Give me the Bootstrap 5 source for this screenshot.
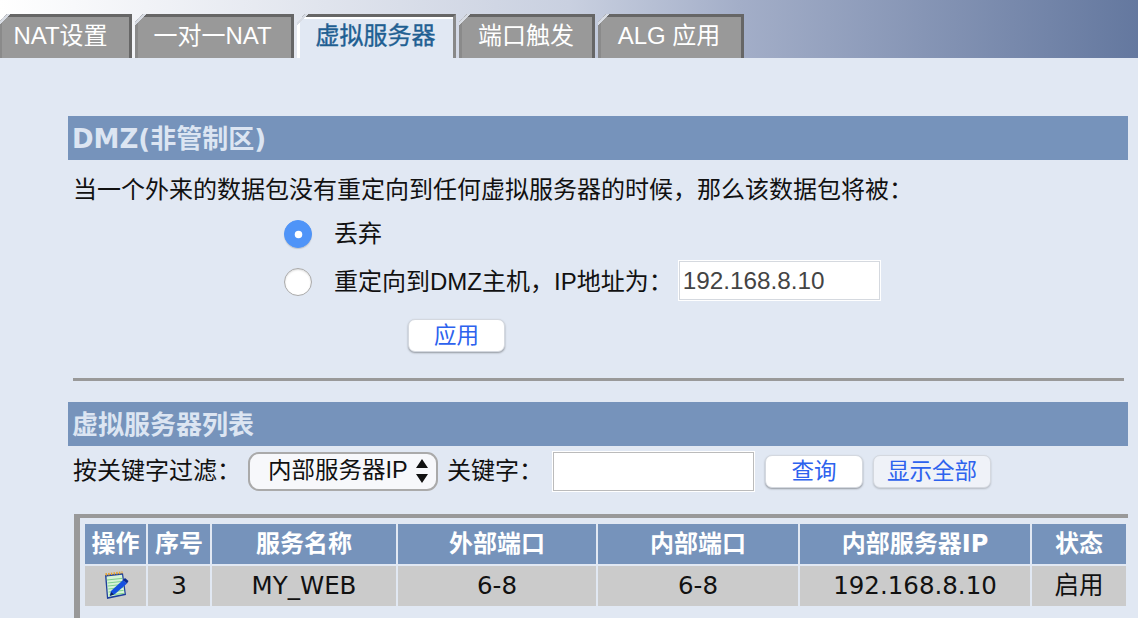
<!DOCTYPE html>
<html lang="zh">
<head>
<meta charset="utf-8">
<title>虚拟服务器</title>
<link href="https://cdn.jsdelivr.net/npm/bootstrap@5.3.0/dist/css/bootstrap.min.css" rel="stylesheet">
<style>
html,body{height:618px;overflow:hidden}
body{background:#e1e8f3;color:#111;font-family:"Liberation Sans","Noto Sans CJK SC",sans-serif;font-size:24px;line-height:1.2}
.top-band{height:58px;background:linear-gradient(90deg,#fff 0,#c9d0e0 50%,#a3aec8 65%,#64789f 100%);padding-top:14px;gap:3px}
.tab-item{position:relative;height:44px;background:#999;color:#fff;font-size:24px;text-decoration:none;border-top:3px solid #666;border-right:3px solid #666;border-left:3px solid #8a8a8a;display:flex;align-items:center;justify-content:center;padding:0 2px 2px 0;clip-path:polygon(8px 0,100% 0,100% 100%,0 100%,0 8px)}
.tab-item::before{content:"";position:absolute;left:-3px;top:-3px;width:12px;height:12px;background:linear-gradient(135deg,transparent 30%,#d8dce4 30%,#d8dce4 46%,transparent 46%)}
.tab-item:hover{color:#fff}
.tab-on{background:#e1e8f3;color:#1f5f92;border-top-color:#666;border-right-color:#888;border-left-color:#fff;box-shadow:inset 0 2px 0 #fff;-webkit-text-stroke:.4px #1f5f92}
.tab-on:hover{color:#1f5f92}
.tab-a{width:133px;margin-left:-1px;padding-right:10px}.tab-b{width:159px;padding-right:4px}.tab-c{width:159px}.tab-d{width:136px}.tab-e{width:146px;padding-right:4px}
.main-pane{margin-left:68px;margin-right:10px}
.sec-head{height:44px;background:#7693bb;color:#dce5f2;font-family:"DejaVu Sans","Noto Sans CJK SC",sans-serif;font-weight:700;font-size:26px;padding:3px 0 0 4px;display:flex;align-items:center}
.sec-first{margin-top:58px}
.intro-line{height:50px;padding:10px 0 0 5px;display:flex;align-items:center;white-space:nowrap}
.radio-row{height:48px;margin-left:216px;display:flex;align-items:center}
.radio-row .form-check-input{width:28px;height:28px;margin:0 22px 0 0;flex:none;border:1px solid #aaa;background-color:#fff;box-shadow:inset 0 1px 2px rgba(0,0,0,.15)}
.radio-row .form-check-input:checked{background-color:#4f94f8;border-color:#4f94f8;background-size:57%;box-shadow:0 1px 1px rgba(0,0,0,.15)}
.txt-box{height:39px;border:1px solid #d5d9df;outline:1px solid #fff;background:#fff;font-size:24.3px;color:#444;padding:0 3px;border-radius:0}
.txt-ip{width:201px;margin:0 0 3px 6px}
.txt-key{width:201px;margin-left:10px;border-color:#bbb}
.act-btn{height:33px;background:#fff;border:1px solid #d4d8df;border-radius:7px;box-shadow:0 1px 2px rgba(0,0,0,.35);color:#2d62ee;font-size:22.5px;line-height:1;padding:2px 0 0;display:flex;align-items:center;justify-content:center}
.act-btn:hover{background:#fff;color:#2d62ee}
.btn-apply{width:97px;margin:13px 0 0 340px}
.btn-query{width:98px;margin-left:11px}
.btn-all{width:118px;margin-left:10px;background:#eff2f8;box-shadow:0 1px 2px rgba(0,0,0,.2)}
.btn-all:hover{background:#eff2f8}
.rule-line{height:3px;background:#999;margin:26px 4px 21px 5px;opacity:1;border:0}
.filter-row{height:50px;padding-left:5px;display:flex;align-items:center;white-space:nowrap}
.filter-sel{flex:none;width:190px;height:39px;margin:0 9px 0 7px;border:2px solid #aaa;border-radius:11px;background-color:#f7f8fb;font-size:23.500px;color:#111;padding:0 20px 0 18px;font-family:inherit;line-height:1;background-size:14px 26px;background-position:right 7px center;background-image:url("data:image/svg+xml,%3Csvg xmlns='http://www.w3.org/2000/svg' viewBox='0 0 14 26'%3E%3Cpath d='M7 1l6 9H1zM7 25l6-9H1z' fill='%23111'/%3E%3C/svg%3E")}
.tbl-frame{margin:18px 0 0 6px;border-top:4px solid #999;border-left:6px solid #999;padding:4px 0 0 3px;height:120px}
.data-tbl{border-collapse:separate;border-spacing:2px;table-layout:fixed;width:1045px;font-family:"DejaVu Sans","Noto Sans CJK SC",sans-serif;text-align:center}
.data-tbl th{height:40px;background:#7693bb;color:#fff;font-size:24px;font-weight:700;padding:0;white-space:nowrap}
.data-tbl td{height:40px;background:#cbcbcb;color:#111;font-size:24.500px;padding:0}
.data-tbl svg{display:block;margin:0 auto}
</style>
</head>
<body>
<nav class="top-band d-flex">
  <a class="tab-item tab-a" href="#">NAT设置</a>
  <a class="tab-item tab-b" href="#">一对一NAT</a>
  <a class="tab-item tab-c tab-on" href="#">虚拟服务器</a>
  <a class="tab-item tab-d" href="#">端口触发</a>
  <a class="tab-item tab-e" href="#">ALG 应用</a>
</nav>
<main class="main-pane">
  <div class="sec-head sec-first">DMZ(非管制区)</div>
  <div class="intro-line">当一个外来的数据包没有重定向到任何虚拟服务器的时候，那么该数据包将被：</div>
  <div class="radio-row">
    <input class="form-check-input" type="radio" name="dmz" checked aria-label="丢弃"><span>丢弃</span>
  </div>
  <div class="radio-row">
    <input class="form-check-input" type="radio" name="dmz" aria-label="重定向"><span>重定向到DMZ主机，IP地址为：</span>
    <input class="txt-box txt-ip" type="text" value="192.168.8.10" aria-label="IP">
  </div>
  <button class="btn act-btn btn-apply" type="button">应用</button>
  <hr class="rule-line">
  <div class="sec-head">虚拟服务器列表</div>
  <div class="filter-row">
    <span>按关键字过滤：</span>
    <select class="form-select filter-sel" aria-label="过滤"><option>内部服务器IP</option></select>
    <span>关键字：</span>
    <input class="txt-box txt-key" type="text" aria-label="关键字">
    <button class="btn act-btn btn-query" type="button">查询</button>
    <button class="btn act-btn btn-all" type="button">显示全部</button>
  </div>
  <div class="tbl-frame">
    <table class="data-tbl">
      <colgroup><col style="width:61px"><col style="width:62px"><col style="width:184px"><col style="width:198px"><col style="width:200px"><col style="width:230px"><col style="width:94px"></colgroup>
      <thead><tr><th>操作</th><th>序号</th><th>服务名称</th><th>外部端口</th><th>内部端口</th><th>内部服务器IP</th><th>状态</th></tr></thead>
      <tbody><tr>
        <td><svg width="28" height="30" viewBox="0 0 28 30" role="img" aria-label="编辑">
          <path d="M3 4l18-2 3 22-19 4z" fill="#1d3f9c"/>
          <path d="M4.500 5.500l15.500-1.700 2.600 19-16.500 3.200z" fill="#d6f3d6"/>
          <path d="M5 9l15-1.600M5.500 12l15-1.600M6 15l15-1.600M6.300 18l15-1.600M6.600 21l15-1.600M6.900 24l15-1.600" stroke="#7fd08f" stroke-width="1"/>
          <path d="M3.500 3.500l17-2" stroke="#e8a32c" stroke-width="2.500" stroke-dasharray="1.500 1.200"/>
          <path d="M9 20l12-11 4 3.500-12 10.500-5 1.500z" fill="#1550e0"/>
          <path d="M21 9l2-2 3.500 3-1.500 2.500z" fill="#0a2a90"/>
          <path d="M8 25l1-4 3 2.500z" fill="#0b1f66"/>
        </svg></td>
        <td>3</td><td>MY_WEB</td><td>6-8</td><td>6-8</td><td>192.168.8.10</td><td>启用</td>
      </tr></tbody>
    </table>
  </div>
</main>
<script src="https://cdn.jsdelivr.net/npm/bootstrap@5.3.0/dist/js/bootstrap.bundle.min.js"></script>
</body>
</html>
